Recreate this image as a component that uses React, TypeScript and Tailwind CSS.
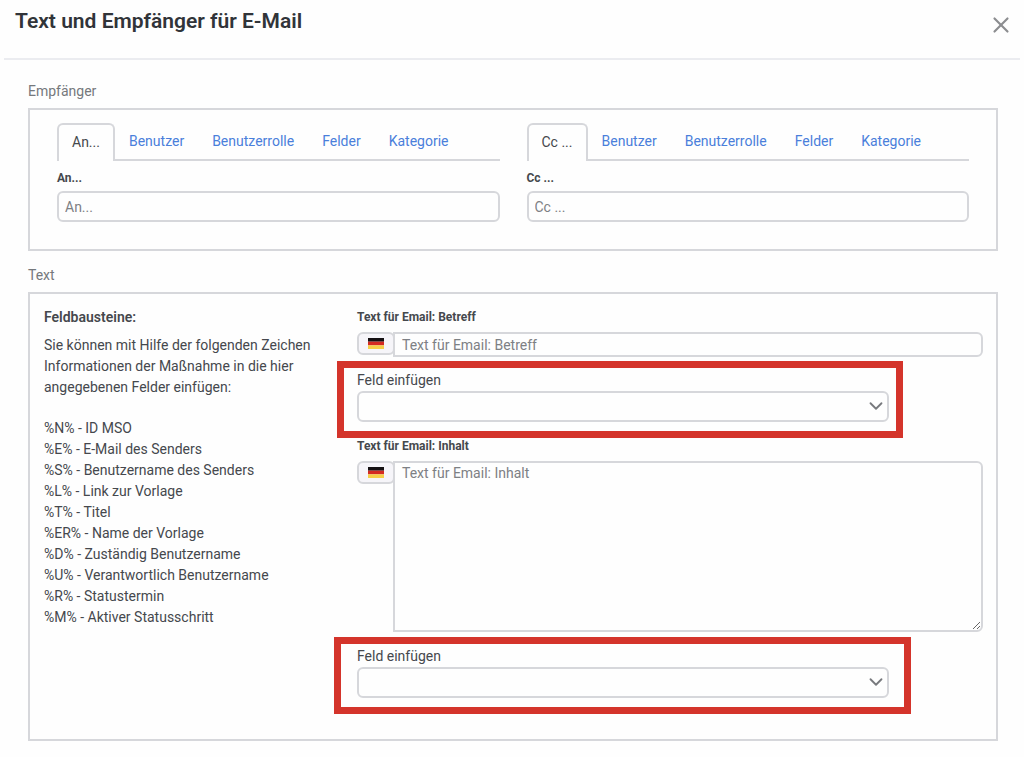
import { useState } from 'react'
import { ChevronDown, X } from 'lucide-react'

const tabs = ['Benutzer', 'Benutzerrolle', 'Felder', 'Kategorie']

const placeholders = [
  '%N% - ID MSO',
  '%E% - E-Mail des Senders',
  '%S% - Benutzername des Senders',
  '%L% - Link zur Vorlage',
  '%T% - Titel',
  '%ER% - Name der Vorlage',
  '%D% - Zuständig Benutzername',
  '%U% - Verantwortlich Benutzername',
  '%R% - Statustermin',
  '%M% - Aktiver Statusschritt',
]

function RecipientTabs({ id, name }: { id: string; name: string }) {
  const [active, setActive] = useState(name)
  const [value, setValue] = useState('')

  return (
    <div className="min-w-0">
      <div role="tablist" className="flex h-[38px]">
        {[name, ...tabs].map((tab) => (
          <button
            key={tab}
            type="button"
            role="tab"
            aria-selected={active === tab}
            onClick={() => setActive(tab)}
            className={
              active === tab
                ? 'rounded-t-md border-2 border-b-0 border-[#d6d7db] px-[13px] pb-0.5 whitespace-nowrap text-[#45484d]'
                : 'border-b-2 border-[#d6d7db] px-[14px] whitespace-nowrap text-[#4a7fdb]'
            }
          >
            {tab}
          </button>
        ))}
        <div className="grow border-b-2 border-[#d6d7db]" />
      </div>
      <label htmlFor={id} className="mt-[7px] mb-[3px] block text-xs leading-5 font-bold">{name}</label>
      <input
        id={id}
        value={value}
        onChange={(e) => setValue(e.target.value)}
        placeholder={name}
        className="block h-[31px] w-full rounded-md border-2 border-[#d6d7db] px-1.5 outline-none placeholder:text-[#7d8084]"
      />
    </div>
  )
}

function FlagButton() {
  return (
    <button
      type="button"
      aria-label="Deutsch"
      className="flex h-[23px] w-[38px] shrink-0 items-center justify-center rounded-md border-2 border-[#d6d7db] bg-[#f6f5f9]"
    >
      <svg width="16" height="11" viewBox="0 0 16 12" preserveAspectRatio="none">
        <rect width="16" height="4" fill="#141012" />
        <rect y="4" width="16" height="4" fill="#d42a22" />
        <rect y="8" width="16" height="4" fill="#f6cf48" />
      </svg>
    </button>
  )
}

function FieldSelect({ id, frame }: { id: string; frame: string }) {
  return (
    <div className="relative w-[85%]">
      <label htmlFor={id} className="block leading-[21px]">Feld einfügen</label>
      <div className="relative">
        <select id={id} className="block h-[31px] w-full appearance-none rounded-md border-2 border-[#d6d7db] px-1.5 outline-none">
          <option value=""></option>
          {placeholders.map((p) => (
            <option key={p} value={p.split(' ')[0]}>{p}</option>
          ))}
        </select>
        <ChevronDown size={22} className="pointer-events-none absolute top-1 right-0.5 text-[#77797d]" />
      </div>
      <div className={`pointer-events-none absolute border-[7px] border-[#d4342b] ${frame}`} />
    </div>
  )
}

export default function App() {
  return (
    <div className="min-h-screen bg-[#fefefe] pb-4 font-['Roboto','Liberation_Sans',sans-serif] text-sm text-[#45484d]">
      <header className="mx-1 flex items-start justify-between border-b-2 border-[#ebecf0] pt-[7px] pr-[5px] pb-[19px] pl-[11px]">
        <h1 className="text-[21px] leading-7 font-semibold text-[#313439]">Text und Empfänger für E-Mail</h1>
        <button type="button" aria-label="Schließen" className="mt-1 flex size-7 items-center justify-center text-[#8c8d90]">
          <X size={26} />
        </button>
      </header>

      <main className="pt-[21px] pr-[26px] pl-7">
        <section>
          <h2 className="mb-[7px] leading-5 text-[#75787c]">Empfänger</h2>
          <div className="grid grid-cols-2 gap-[27px] border-2 border-[#d6d7db] px-[27px] pt-[13px] pb-[27px]">
            <RecipientTabs id="an" name="An..." />
            <RecipientTabs id="cc" name="Cc ..." />
          </div>
        </section>

        <section className="mt-[14px]">
          <h2 className="mb-[7px] leading-5 text-[#75787c]">Text</h2>
          <div className="flex border-2 border-[#d6d7db] pt-[13px] pr-[13px] pb-[41px] pl-[14px]">
            <div className="w-1/3 pr-8 leading-[21px]">
              <h3 className="mb-[7px] font-semibold">Feldbausteine:</h3>
              <p className="mb-5">
                Sie können mit Hilfe der folgenden Zeichen Informationen der Maßnahme in die hier angegebenen Felder einfügen:
              </p>
              <ul>
                {placeholders.map((p) => (
                  <li key={p}>{p}</li>
                ))}
              </ul>
            </div>

            <div className="min-w-0 flex-1">
              <label htmlFor="betreff" className="mb-1 block text-xs leading-[21px] font-bold">Text für Email: Betreff</label>
              <div className="mb-[13px] flex items-start">
                <FlagButton />
                <input
                  id="betreff"
                  placeholder="Text für Email: Betreff"
                  className="-ml-0.5 h-[25px] min-w-0 flex-1 rounded-r-md border-2 border-[#d6d7db] px-[7px] outline-none placeholder:text-[#7d8084]"
                />
              </div>
              <FieldSelect id="feld-betreff" frame="-top-[9px] -right-[14px] -bottom-4 -left-5" />

              <label htmlFor="inhalt" className="mt-[14px] mb-1 block text-xs leading-[21px] font-bold">Text für Email: Inhalt</label>
              <div className="mb-[14px] flex items-start">
                <FlagButton />
                <textarea
                  id="inhalt"
                  placeholder="Text für Email: Inhalt"
                  className="-ml-0.5 h-[171px] min-w-0 flex-1 rounded-r-md border-2 border-[#d6d7db] px-[7px] outline-none placeholder:text-[#7d8084]"
                />
              </div>
              <FieldSelect id="feld-inhalt" frame="-top-[9px] -right-[22px] -bottom-4 -left-[23px]" />
            </div>
          </div>
        </section>
      </main>
    </div>
  )
}
